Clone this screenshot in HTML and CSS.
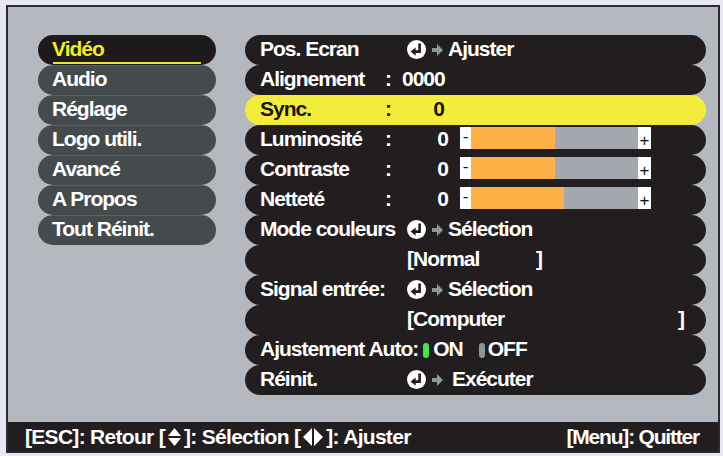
FILE: index.html
```html
<!DOCTYPE html>
<html lang="fr">
<head>
<meta charset="utf-8">
<title>Menu Vidéo</title>
<link rel="stylesheet" href="styles.css">
</head>
<body>
<div class="screen">
  <div class="main">
    <ul class="menu">
      <li class="menu-item active">Vidéo</li>
      <li class="menu-item">Audio</li>
      <li class="menu-item">Réglage</li>
      <li class="menu-item">Logo utili.</li>
      <li class="menu-item">Avancé</li>
      <li class="menu-item">A Propos</li>
      <li class="menu-item">Tout Réinit.</li>
    </ul>
    <div class="panel">
      <div class="row">
        <span class="label wide">Pos. Ecran</span>
        <svg class="enter" viewBox="0 0 19 19" width="19" height="19"><circle cx="9.5" cy="9.5" r="9.5" fill="#fff"/><path d="M12.6 3.6V11.6H8" fill="none" stroke="#1e1a1b" stroke-width="2.6"/><path d="M3.6 11.6L8.6 7.4V15.8Z" fill="#1e1a1b"/></svg>
        <svg class="arrow" viewBox="0 0 11 12" width="11" height="12"><path d="M0 4H5V0L11 6L5 12V8H0Z" fill="#8e979b"/></svg>
        <span>Ajuster</span>
      </div>
      <div class="row">
        <span class="label">Alignement</span><span class="colon">:</span><span>0000</span>
      </div>
      <div class="row sel">
        <span class="label">Sync.</span><span class="colon">:</span><span class="num sync">0</span>
      </div>
      <div class="row">
        <span class="label">Luminosité</span><span class="colon">:</span><span class="num">0</span>
        <div class="bar"><span class="bar-end minus">-</span><span class="bar-track"><span class="bar-fill" style="width:84px"></span></span><span class="bar-end plus">+</span></div>
      </div>
      <div class="row">
        <span class="label">Contraste</span><span class="colon">:</span><span class="num">0</span>
        <div class="bar"><span class="bar-end minus">-</span><span class="bar-track"><span class="bar-fill" style="width:84px"></span></span><span class="bar-end plus">+</span></div>
      </div>
      <div class="row">
        <span class="label">Netteté</span><span class="colon">:</span><span class="num">0</span>
        <div class="bar"><span class="bar-end minus">-</span><span class="bar-track"><span class="bar-fill" style="width:93px"></span></span><span class="bar-end plus">+</span></div>
      </div>
      <div class="row">
        <span class="label wide">Mode couleurs</span>
        <svg class="enter" viewBox="0 0 19 19" width="19" height="19"><circle cx="9.5" cy="9.5" r="9.5" fill="#fff"/><path d="M12.6 3.6V11.6H8" fill="none" stroke="#1e1a1b" stroke-width="2.6"/><path d="M3.6 11.6L8.6 7.4V15.8Z" fill="#1e1a1b"/></svg>
        <svg class="arrow" viewBox="0 0 11 12" width="11" height="12"><path d="M0 4H5V0L11 6L5 12V8H0Z" fill="#8e979b"/></svg>
        <span>Sélection</span>
      </div>
      <div class="row">
        <span class="label wide"></span><span class="choice normal">[Normal</span><span>]</span>
      </div>
      <div class="row">
        <span class="label wide">Signal entrée:</span>
        <svg class="enter" viewBox="0 0 19 19" width="19" height="19"><circle cx="9.5" cy="9.5" r="9.5" fill="#fff"/><path d="M12.6 3.6V11.6H8" fill="none" stroke="#1e1a1b" stroke-width="2.6"/><path d="M3.6 11.6L8.6 7.4V15.8Z" fill="#1e1a1b"/></svg>
        <svg class="arrow" viewBox="0 0 11 12" width="11" height="12"><path d="M0 4H5V0L11 6L5 12V8H0Z" fill="#8e979b"/></svg>
        <span>Sélection</span>
      </div>
      <div class="row">
        <span class="label wide"></span><span class="choice computer">[Computer</span><span>]</span>
      </div>
      <div class="row">
        <span>Ajustement Auto:</span>
        <span class="pill on"></span><span class="opt-on">ON</span>
        <span class="pill off"></span><span>OFF</span>
      </div>
      <div class="row">
        <span class="label wide">Réinit.</span>
        <svg class="enter" viewBox="0 0 19 19" width="19" height="19"><circle cx="9.5" cy="9.5" r="9.5" fill="#fff"/><path d="M12.6 3.6V11.6H8" fill="none" stroke="#1e1a1b" stroke-width="2.6"/><path d="M3.6 11.6L8.6 7.4V15.8Z" fill="#1e1a1b"/></svg>
        <svg class="arrow" viewBox="0 0 11 12" width="11" height="12"><path d="M0 4H5V0L11 6L5 12V8H0Z" fill="#8e979b"/></svg>
        <span class="exec">Exécuter</span>
      </div>
    </div>
  </div>
  <div class="footer">
    <span class="hint nav">[ESC]: Retour [<svg class="key ud" viewBox="0 0 13 18" width="13" height="18"><path d="M6.5 0L13 8H0Z M0 10H13L6.5 18Z" fill="#fff"/></svg>]: Sélection [<svg class="key lr" viewBox="0 0 20 18" width="20" height="18"><path d="M9 0V18L0 9Z M11 0L20 9L11 18Z" fill="#fff"/></svg>]: Ajuster</span>
    <span class="hint">[Menu]: Quitter</span>
  </div>
</div>
</body>
</html>
```

FILE: styles.css
```css
* {
  box-sizing: border-box;
  margin: 0;
  padding: 0;
}

html,
body {
  width: 723px;
  height: 456px;
  overflow: hidden;
}

body {
  background: #e7e8f3;
  padding: 5px 3px 0 6px;
  font-family: "Liberation Sans", Arial, sans-serif;
  font-weight: bold;
  font-size: 21px;
  letter-spacing: -1px;
  color: #ffffff;
}

.screen {
  width: 714px;
  height: 448px;
  border: 2px solid #2b2a2f;
  background: #b5b9bf;
  display: flex;
  flex-direction: column;
}

.main {
  flex: 1;
  display: flex;
  gap: 29px;
  padding: 28px 12px 0 30px;
}

/* left menu */
.menu {
  list-style: none;
  width: 178px;
  flex: none;
}

.menu-item {
  height: 30px;
  line-height: 28px;
  padding-left: 14px;
  border-radius: 15px;
  background: linear-gradient(#5b6063, #5b6063) no-repeat 0 0 / 100% 1px, #454b4d;
  white-space: nowrap;
}

.menu-item.active {
  background: linear-gradient(#ece42c, #ece42c) no-repeat 15px 27px / 148px 2px, #1e1a1b;
  color: #f2e92e;
}

/* right panel */
.panel {
  flex: 1;
}

.row {
  height: 30px;
  line-height: 28px;
  padding-bottom: 2px;
  border-radius: 15px;
  background: #221e1f;
  display: flex;
  align-items: center;
  padding-left: 15px;
  white-space: nowrap;
}

.row.sel {
  background: #f3ec3a;
  color: #1a1718;
}

.label {
  width: 125px;
  flex: none;
}

.label.wide {
  width: 147px;
}

.colon {
  width: 17px;
  flex: none;
}

.num {
  width: 46px;
  flex: none;
  text-align: right;
}

.num.sync {
  width: 42px;
}

.enter {
  flex: none;
  margin-top: 1px;
}

.arrow {
  flex: none;
  margin: 1px 5px 0 6px;
}

.exec {
  margin-left: 4px;
}

.choice.normal {
  display: inline-block;
  width: 129px;
}

.choice.computer {
  display: inline-block;
  width: 271px;
}

/* bars */
.bar {
  display: flex;
  width: 191px;
  height: 22px;
  margin: -2px 0 0 12px;
  flex: none;
  letter-spacing: 0;
}

.bar-end {
  flex: none;
  background: #ffffff;
  color: #111111;
  font-weight: normal;
  font-size: 17px;
  text-align: center;
}

.bar-end.minus {
  width: 11px;
  line-height: 20px;
}

.bar-end.plus {
  width: 13px;
  line-height: 28px;
}

.bar-track {
  flex: 1;
  display: flex;
  background: #a4a7ad;
}

.bar-fill {
  display: block;
  height: 100%;
  background: #fcb147;
}

/* on / off */
.pill {
  flex: none;
  width: 6px;
  height: 15px;
  border-radius: 3px;
  margin-top: 2px;
}

.pill.on {
  background: #4be04f;
  margin-left: 5px;
  margin-right: 4px;
}

.pill.off {
  background: #8e959a;
  margin-left: 16px;
  margin-right: 3px;
}

/* footer */
.footer {
  height: 29px;
  line-height: 29px;
  background: #221e1f;
  display: flex;
  justify-content: space-between;
  align-items: center;
  padding: 0 19px 0 17px;
  white-space: nowrap;
  letter-spacing: -1.2px;
}

.hint {
  display: flex;
  align-items: center;
}

.hint.nav {
  letter-spacing: -0.7px;
}

.key {
  margin: 0 3px;
}
```
